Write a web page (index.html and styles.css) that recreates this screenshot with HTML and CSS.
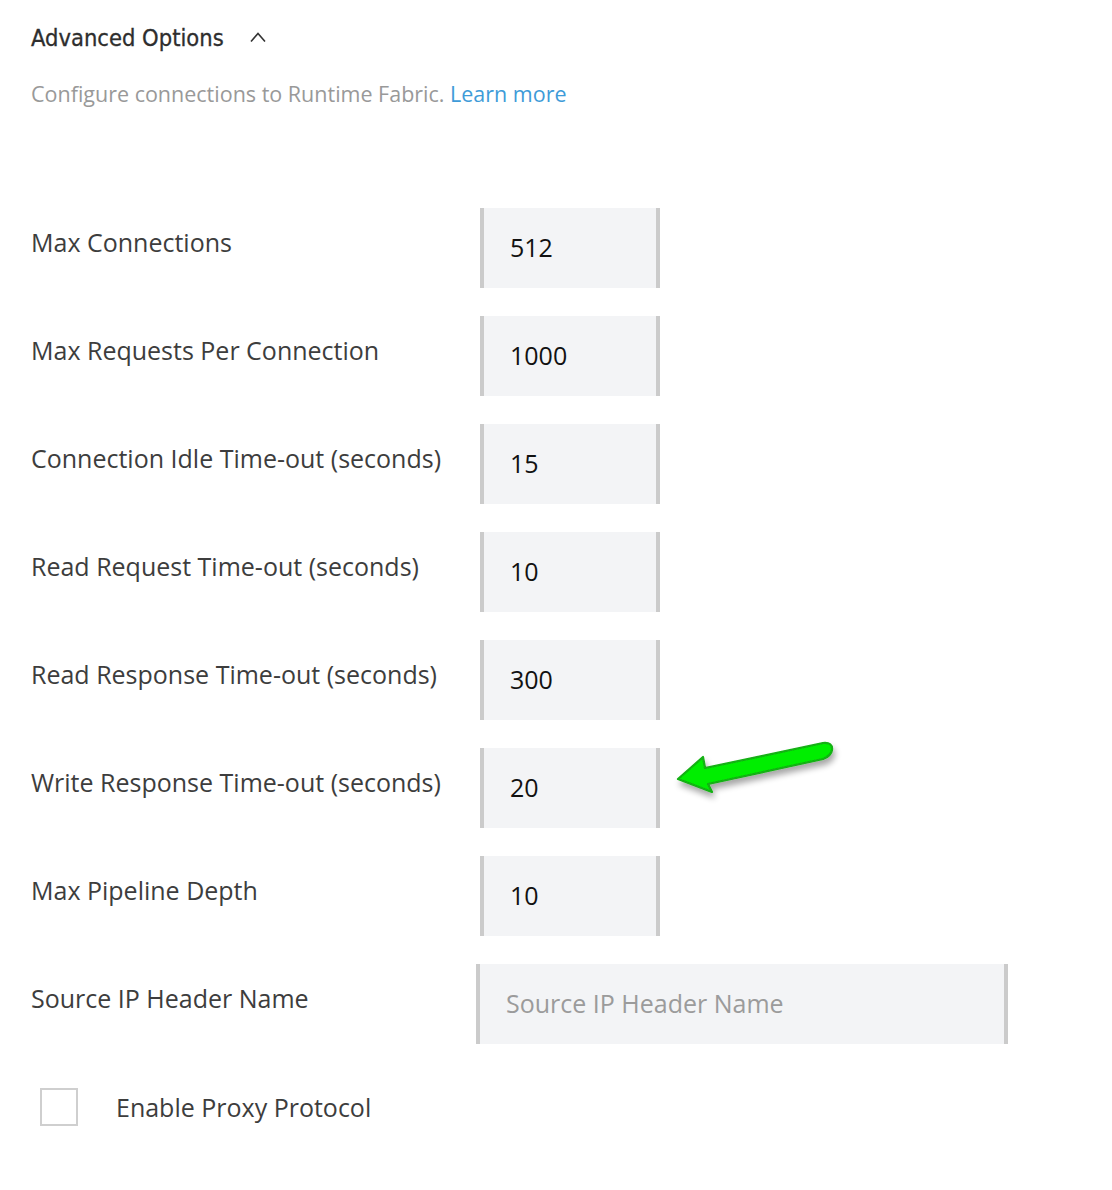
FILE: index.html
```html
<!DOCTYPE html>
<html>
<head>
<meta charset="utf-8">
<link rel="stylesheet" href="styles.css">
</head>
<body>
<div class="panel">
  <div class="heading">
    <span class="heading-text">Advanced Options</span>
    <svg class="chevron" width="16" height="10" viewBox="0 0 16 10"><polyline points="1,9.5 8,1.5 15,9.5" fill="none" stroke="#333" stroke-width="1.6"/></svg>
  </div>
  <p class="subtitle">Configure connections to Runtime Fabric. <a class="link" href="#">Learn more</a></p>

  <div class="form">
    <div class="row"><label class="label">Max Connections</label><div class="input"><span class="value">512</span></div></div>
    <div class="row"><label class="label">Max Requests Per Connection</label><div class="input"><span class="value">1000</span></div></div>
    <div class="row"><label class="label">Connection Idle Time-out (seconds)</label><div class="input"><span class="value">15</span></div></div>
    <div class="row"><label class="label">Read Request Time-out (seconds)</label><div class="input"><span class="value">10</span></div></div>
    <div class="row"><label class="label">Read Response Time-out (seconds)</label><div class="input"><span class="value">300</span></div></div>
    <div class="row"><label class="label">Write Response Time-out (seconds)</label><div class="input"><span class="value">20</span></div></div>
    <div class="row"><label class="label">Max Pipeline Depth</label><div class="input"><span class="value">10</span></div></div>
    <div class="row row-wide"><label class="label">Source IP Header Name</label><div class="input input-wide"><span class="placeholder">Source IP Header Name</span></div></div>
  </div>

  <div class="check-row">
    <span class="checkbox"></span>
    <span class="check-label">Enable Proxy Protocol</span>
  </div>
</div>

<svg class="annotation" width="180" height="70" viewBox="0 0 180 70">
  <defs>
    <filter id="sh" x="-20%" y="-30%" width="140%" height="170%">
      <feGaussianBlur in="SourceAlpha" stdDeviation="3"/>
      <feOffset dx="2" dy="5" result="b"/>
      <feComponentTransfer><feFuncA type="linear" slope="0.35"/></feComponentTransfer>
      <feMerge><feMergeNode/><feMergeNode in="SourceGraphic"/></feMerge>
    </filter>
  </defs>
  <path filter="url(#sh)" d="M8,44 L33,22 L35,33 L153,8 Q163,7 162,15 Q161,21 153,24 L38,49 L42,57 Z" fill="#00ee00" stroke="#12b012" stroke-width="2.2" stroke-linejoin="round"/>
</svg>
</body>
</html>
```
FILE: styles.css
```css
html, body {
  margin: 0;
  padding: 0;
  background: #fff;
}
body {
  font-family: "Open Sans", "Liberation Sans", sans-serif;
  color: #3d3d3d;
  position: relative;
  width: 1112px;
  min-height: 1190px;
}
.panel {
  padding: 22px 0 0 31px;
}
.heading {
  display: flex;
  align-items: center;
  gap: 26px;
  height: 32px;
}
.heading-text {
  font-family: "Liberation Sans Narrow", "DejaVu Sans Condensed", "Roboto", sans-serif;
  font-size: 23.5px;
  color: #2e2e2e;
  line-height: 32px;
  -webkit-text-stroke: 0.3px #2e2e2e;
}
.chevron {
  display: block;
  margin-top: -2px;
}
.subtitle {
  margin: 25px 0 0 0;
  font-size: 21.5px;
  line-height: 30px;
  color: #999;
}
.link {
  color: #3e9bd8;
  text-decoration: none;
}
.form {
  margin-top: 99px;
  display: flex;
  flex-direction: column;
  gap: 28px;
}
.row {
  display: flex;
  align-items: flex-start;
}
.label {
  width: 449px;
  flex: none;
  font-size: 25px;
  line-height: 30px;
  padding-top: 19px;
  color: #3d3d3d;
}
.row-wide .label {
  width: 445px;
}
.input {
  box-sizing: border-box;
  width: 180px;
  height: 80px;
  background: #f3f4f6;
  border-left: 4px solid #cbcbcb;
  border-right: 4px solid #cbcbcb;
  padding-left: 26px;
  padding-bottom: 3px;
  display: flex;
  align-items: center;
  font-size: 25px;
}
.input-wide {
  width: 532px;
}
.value {
  color: #111;
  line-height: 30px;
}
.placeholder {
  color: #9b9b9b;
  line-height: 30px;
}
.check-row {
  margin-top: 44px;
  display: flex;
  align-items: center;
  padding-left: 9px;
}
.checkbox {
  box-sizing: border-box;
  width: 38px;
  height: 38px;
  border: 2px solid #cfcfcf;
  background: #fff;
  flex: none;
}
.check-label {
  margin-left: 38px;
  font-size: 25px;
  line-height: 30px;
  color: #3d3d3d;
}
.annotation {
  position: absolute;
  left: 670px;
  top: 735px;
}
```
